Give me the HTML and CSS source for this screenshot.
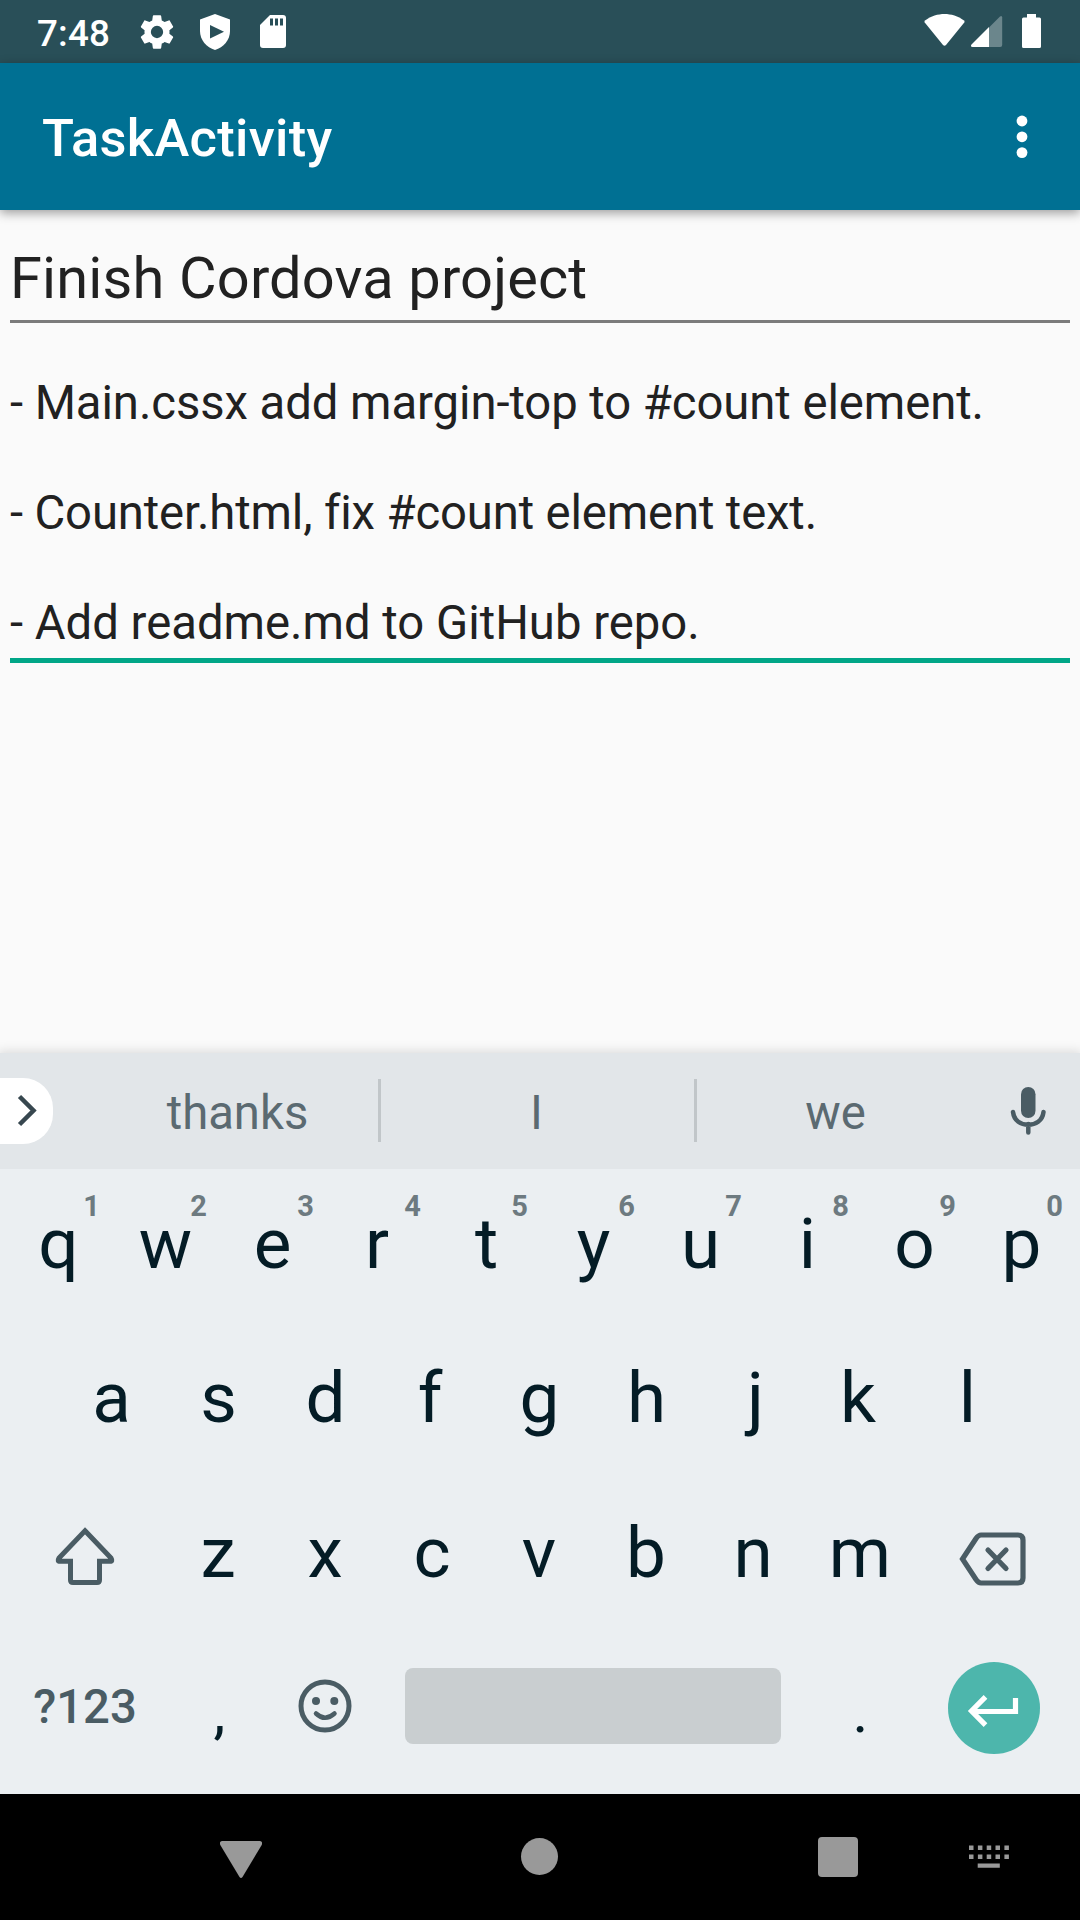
FILE: index.html
```html
<!DOCTYPE html>
<html lang="en">
<head>
<meta charset="utf-8">
<title>TaskActivity</title>
<link rel="stylesheet" href="styles.css">
</head>
<body>
<div class="screen">
  <header class="status">
    <span class="clock">7:48</span>
    <svg class="gear" width="40" height="40" viewBox="0 0 24 24" fill="#fff"><path d="M19.43 12.98c.04-.32.07-.64.07-.98s-.03-.66-.07-.98l2.11-1.65c.19-.15.24-.42.12-.64l-2-3.46c-.12-.22-.39-.3-.61-.22l-2.49 1c-.52-.4-1.08-.73-1.69-.98l-.38-2.65C14.460 2.180 14.250 2 14 2h-4c-.25 0-.46.18-.49.42l-.38 2.650c-.61.25-1.170.59-1.690.98l-2.490-1c-.23-.09-.49 0-.61.22l-2 3.460c-.13.22-.07.49.12.64l2.110 1.650c-.04.32-.07.65-.07.98s.03.66.07.98l-2.110 1.650c-.19.15-.24.42-.12.64l2 3.460c.12.22.39.3.61.22l2.490-1c.52.4 1.080.73 1.690.98l.38 2.650c.03.24.24.42.49.42h4c.25 0 .46-.18.49-.42l.38-2.650c.61-.25 1.170-.59 1.690-.98l2.490 1c.23.09.49 0 .61-.22l2-3.460c.12-.22.07-.49-.12-.64l-2.110-1.650zM12 15.700a3.700 3.700 0 1 1 0-7.400 3.700 3.700 0 0 1 0 7.400z"/></svg>
    <svg class="shield" width="30" height="63" viewBox="0 0 30 63"><path d="M15 14L30 19.500V31c0 9-6.500 16.500-15 19C6.500 47.500 0 40 0 31V19.500z" fill="#fff"/><path d="M10 25v13.500l14-6.700z" fill="#294f58"/></svg>
    <svg class="sd" width="26" height="63" viewBox="0 0 26 63"><path d="M10 15h13a3 3 0 0 1 3 3v27a3 3 0 0 1-3 3H3a3 3 0 0 1-3-3V25z" fill="#fff"/><path d="M10 18.500h3v7h-3zm5 0h3v7h-3zm5 0h3v7h-3z" fill="#294f58"/></svg>
    <svg class="wifi" width="41" height="63" viewBox="0 0 41 63" fill="#fff"><path d="M1 20.500C7 16 14 14 20.500 14S34 16 40 20.500q1 1 .3 2L22 45q-1.500 1.500-3 0L.7 22.500q-.7-1 .3-2z"/></svg>
    <svg class="signal" width="32" height="63" viewBox="0 0 32 63"><path d="M18 47V27.500L29 16.500q2-1.500 2.200 1V45q0 2-2 2z" fill="#6b868c"/><path d="M18 27V47H1.500Q-1 46.500.5 44.500z" fill="#fff"/></svg>
    <svg class="battery" width="19" height="63" viewBox="0 0 19 63" fill="#fff"><path d="M5 14h9v3.500h3.500q1.500 0 1.500 1.500v27.500q0 1.500-1.500 1.500h-16Q0 48 0 46.500V19q0-1.500 1.500-1.500H5z"/></svg>
  </header>
  <div class="appbar">
    <h1>TaskActivity</h1>
    <svg width="12" height="44" viewBox="0 0 12 44" fill="#fff"><circle cx="6" cy="6" r="5.400"/><circle cx="6" cy="21.800" r="5.400"/><circle cx="6" cy="37.600" r="5.400"/></svg>
  </div>
  <main class="content">
    <div class="field name">Finish Cordova project</div>
    <div class="field notes"><span class="line1">- Main.cssx add margin-top to #count element.</span>

<span class="line2">- Counter.html, fix #count element text.</span>

- Add readme.md to GitHub repo.</div>
  </main>
  <section class="keyboard">
    <div class="strip">
      <div class="chip"><svg width="54" height="66" viewBox="0 0 54 66" fill="none" stroke="#37474f" stroke-width="4.500"><path d="M19.500 18.500L33.500 32.500 19.500 46.500"/></svg></div>
      <span class="word">thanks</span>
      <i class="rule"></i>
      <span class="word mid">I</span>
      <i class="rule"></i>
      <span class="word last">we</span>
      <svg class="mic" width="36" height="50" viewBox="0 0 36 50"><rect x="11" y="1" width="14.500" height="31" rx="7.250" fill="#4a5c64"/><path d="M3 26c1 9 8 12.800 15.200 12.800S32.500 35 33.500 26M18.300 38v8.500" fill="none" stroke="#4a5c64" stroke-width="4.500" stroke-linecap="round"/></svg>
    </div>
    <div class="row r1">
      <span class="key">q<sup>1</sup></span><span class="key">w<sup>2</sup></span><span class="key">e<sup>3</sup></span><span class="key left">r<sup>4</sup></span><span class="key">t<sup>5</sup></span><span class="key">y<sup>6</sup></span><span class="key">u<sup>7</sup></span><span class="key">i<sup>8</sup></span><span class="key">o<sup>9</sup></span><span class="key">p<sup>0</sup></span>
    </div>
    <div class="row r2">
      <span class="key">a</span><span class="key">s</span><span class="key">d</span><span class="key left">f</span><span class="key">g</span><span class="key">h</span><span class="key right">j</span><span class="key left">k</span><span class="key">l</span>
    </div>
    <div class="row r3">
      <span class="key shift"><svg width="60" height="60" viewBox="0 0 60 60" fill="none" stroke="#4a5c64" stroke-width="5"><path d="M30 3.800L56 31q2 3.300-1 3.300H44.500V53q0 2.500-2.500 2.500H18q-2.500 0-2.500-2.500V34.300H5Q2 34.300 4 31z"/></svg></span>
      <span class="key">z</span><span class="key">x</span><span class="key">c</span><span class="key">v</span><span class="key">b</span><span class="key">n</span><span class="key">m</span>
      <span class="key back"><svg width="68" height="54" viewBox="0 0 68 54" fill="none" stroke="#4a5c64" stroke-width="5.200"><path d="M3.500 27L17 6.500Q19.500 3 22 3H59q5 0 5 5V46q0 5-5 5H22Q19.500 51 17 47.500z"/><path d="M29 18L47 36.500M47 18L29 36.500" stroke-linecap="round"/></svg></span>
    </div>
    <div class="row r4">
      <span class="mode">?123</span>
      <span class="punct comma">,</span>
      <span class="emoji"><svg width="54" height="54" viewBox="0 0 54 54"><circle cx="27" cy="27" r="24" fill="none" stroke="#4a5c64" stroke-width="5"/><circle cx="18" cy="22" r="4" fill="#4a5c64"/><circle cx="36.300" cy="22" r="4" fill="#4a5c64"/><path d="M18 34.500Q27 43 36.500 34.500" fill="none" stroke="#4a5c64" stroke-width="4.500" stroke-linecap="round"/></svg></span>
      <span class="space"></span>
      <span class="punct">.</span>
      <span class="enter"><svg width="92" height="92" viewBox="0 0 92 92" fill="none" stroke="#fff" stroke-width="5.200"><path d="M67.500 36V49.500H25M37.500 34.800L23.500 49 37.500 63.200"/></svg></span>
    </div>
  </section>
  <nav class="navbar">
    <svg class="nb" width="42" height="37" viewBox="0 0 42 37" fill="#999"><path d="M2 0H40q3 .8 1.700 4L22.500 36q-1.500 2-3 0L.3 4Q-1 .8 2 0z"/></svg>
    <span class="home"></span>
    <span class="recent"></span>
    <svg class="kb" width="42" height="24" viewBox="0 0 42 24" fill="#999"><path d="M1 .5h4.500V5H1zm8.900 0h4.500V5H9.900zm8.800 0h4.500V5h-4.500zm8.800 0H32V5h-4.500zm8.900 0h4.500V5h-4.500zM1 9.400h4.500v4.500H1zm8.900 0h4.500v4.500H9.900zm8.800 0h4.500v4.500h-4.500zm8.800 0H32v4.500h-4.500zm8.900 0h4.500v4.500h-4.500zM9.700 18.400h22.100v4.300H9.700z"/></svg>
  </nav>
</div>
</body>
</html>
```
FILE: styles.css
```css
* { box-sizing: border-box; }
body { margin: 0; font-family: Roboto, "Liberation Sans", sans-serif; }
svg { display: block; flex: none; }
.screen { width: 1080px; height: 1920px; display: flex; flex-direction: column; background: #fafafa; overflow: hidden; }

.status { height: 63px; flex: none; background: #294f58; color: #fff; display: flex; align-items: center; padding: 0 39px 0 37px; }
.clock { width: 100px; font-size: 36.75px; font-weight: 500; padding-top: 4px; letter-spacing: .2px; }
.shield { margin-left: 23px; }
.sd { margin-left: 30px; }
.wifi { margin-left: auto; }
.signal { margin-left: 6px; }
.battery { margin-left: 19px; }

.appbar { height: 147px; flex: none; background: #007093; color: #fff; display: flex; align-items: center; justify-content: space-between; padding: 0 52px 0 42px; box-shadow: 0 3px 10px rgba(0,0,0,.38); }
.appbar h1 { margin: 0; font-size: 52.500px; font-weight: 500; padding-top: 3px; letter-spacing: .3px; }

.content { flex: 1; padding: 0 10px; color: #212121; }
.field { white-space: pre; }
.name { font-size: 57.750px; line-height: 68px; height: 113px; padding-top: 34px; border-bottom: 3px solid #7b7b7b; letter-spacing: .17px; }
.notes { font-size: 47.250px; line-height: 55px; height: 340px; padding-top: 53px; border-bottom: 5px solid #00a687; }
.line1 { letter-spacing: -.07px; }
.line2 { letter-spacing: -.14px; }

.keyboard { height: 741px; flex: none; background: #ebeff2; box-shadow: 0 0 10px 2px rgba(0,0,0,.12); }
.strip { height: 116px; background: #e2e6e9; display: flex; align-items: center; color: #5b6a71; font-size: 47.250px; padding: 0 34px 1px 0; }
.chip { width: 53px; height: 66px; background: #fff; border-radius: 0 30px 30px 0; }
.word { width: 325px; padding: 5px 0 0 44px; text-align: center; }
.mid { width: 313px; padding: 5px 2px 0 0; }
.last { width: 277px; padding-left: 0; }
.rule { width: 3px; height: 63px; background: #c1c6c9; flex: none; }
.mic { margin-left: auto; }

.row { display: flex; color: #041c26; font-size: 71px; padding: 0 5px; }
.key { width: 107px; display: flex; align-items: center; justify-content: center; position: relative; }
.key sup { position: absolute; right: 12px; top: 20px; font-size: 29px; line-height: 34px; font-weight: 700; color: #6d7a80; }
.left { padding-right: 5px; }
.right { padding-left: 4px; }
.r1 { height: 149px; }
.r2 { height: 158px; padding-left: 58px; }
.r3 { height: 153px; }
.r4 { height: 165px; align-items: center; padding-bottom: 12px; }
.shift, .back { width: 159.500px; }
.shift svg { margin-top: 8px; }
.back svg { margin-top: 13px; }
.mode { width: 160px; text-align: center; font-size: 47.250px; font-weight: 500; color: #4a5c64; padding-top: 2px; }
.punct { width: 107px; text-align: center; font-size: 60px; padding-top: 12px; }
.comma { padding-left: 2px; }
.emoji { width: 107px; display: flex; justify-content: center; padding-right: 1px; }
.space { width: 376px; height: 76px; margin: 0 26px; border-radius: 8px; background: #c9ced0; }
.enter { width: 92px; height: 92px; margin: 5px 35px 0 34px; border-radius: 50%; background: #4db6ac; }

.navbar { height: 126px; flex: none; background: #000; display: flex; align-items: center; padding-left: 220px; }
.nb { margin-top: 5px; }
.home { width: 37px; height: 37px; border-radius: 50%; background: #999; margin: 0 0 1px 259px; }
.recent { width: 40px; height: 40px; border-radius: 4px; background: #999; margin-left: 260px; }
.kb { margin-left: 110px; }
```
